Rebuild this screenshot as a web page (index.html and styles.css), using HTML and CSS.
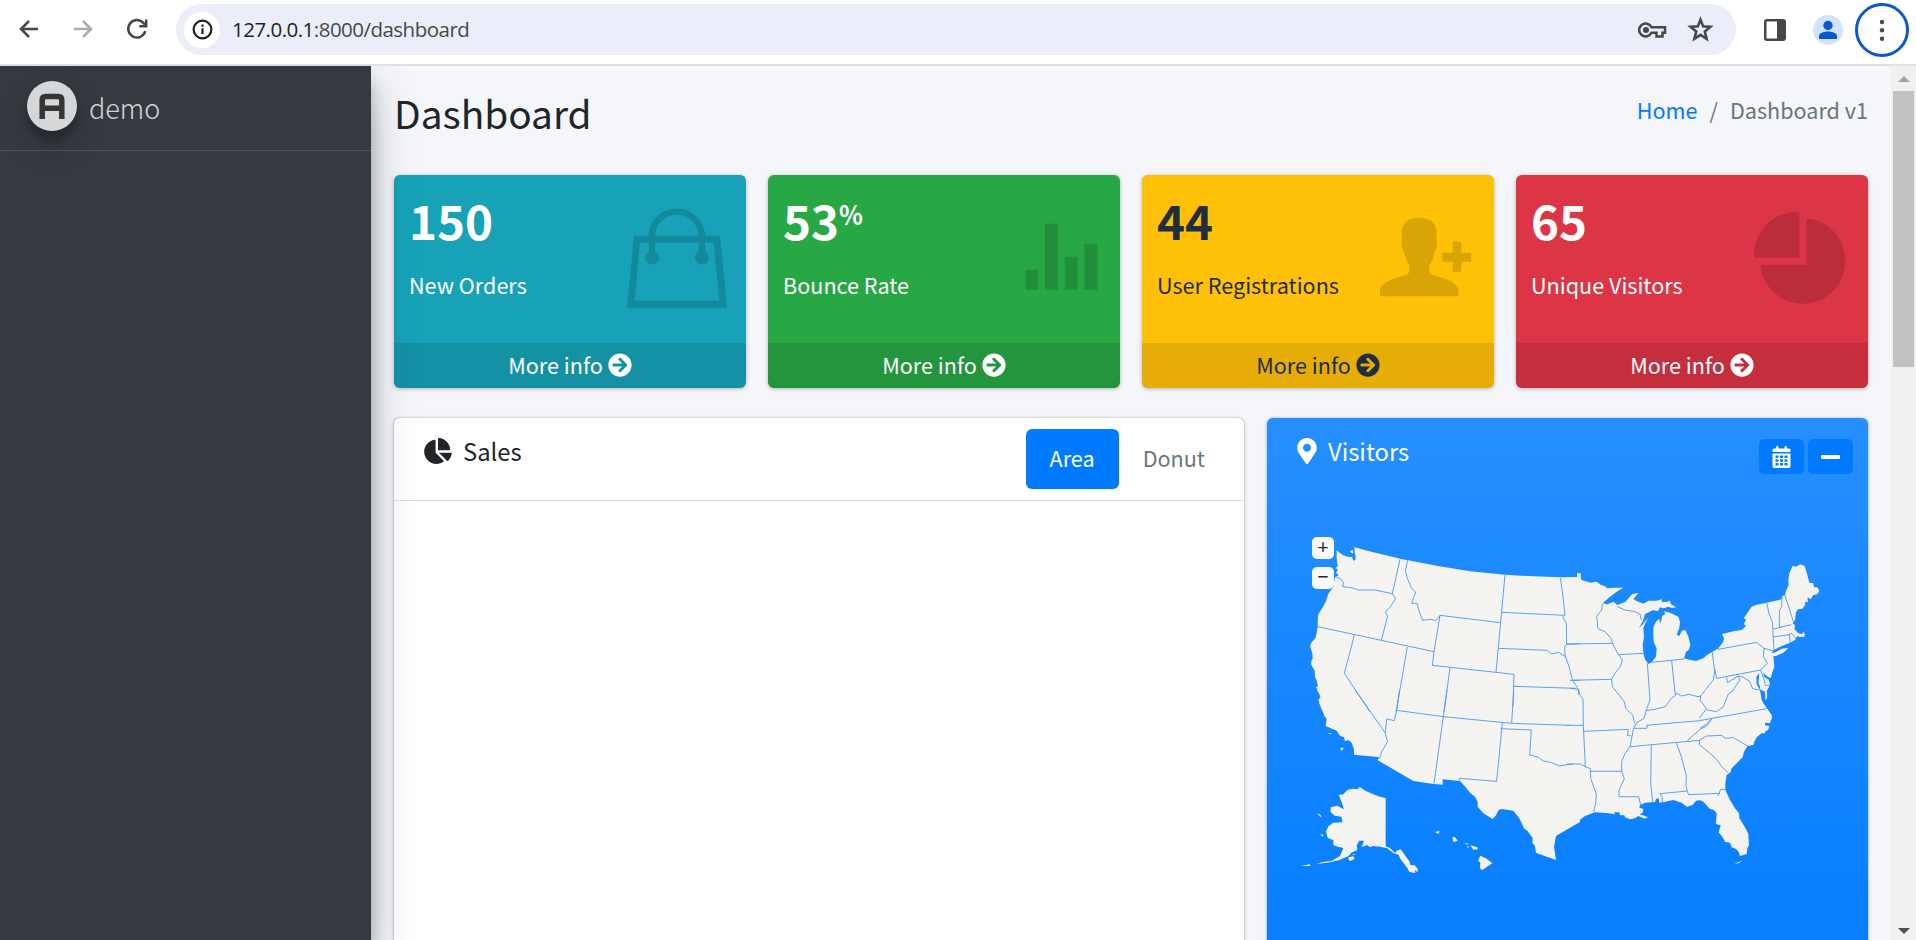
FILE: index.html
```html
<!DOCTYPE html>
<html lang="en">
<head>
<meta charset="utf-8">
<title>Dashboard</title>
<link rel="stylesheet" href="styles.css">
</head>
<body>
<svg class="defs" width="0" height="0">
  <symbol id="go" viewBox="0 0 512 512"><path d="M256 8c137 0 248 111 248 248S393 504 256 504 8 393 8 256 119 8 256 8zm-28.900 143.600l75.500 72.400H120c-13.300 0-24 10.700-24 24v16c0 13.300 10.700 24 24 24h182.600l-75.500 72.400c-9.700 9.300-9.900 24.800-.400 34.300l11 10.900c9.400 9.400 24.600 9.400 33.900 0L404.300 273c9.400-9.400 9.400-24.600 0-33.900L271.600 106.300c-9.400-9.400-24.600-9.400-33.900 0l-11 10.900c-9.500 9.600-9.300 25.100.400 34.400z"/></symbol>
</svg>
<header class="browser">
  <svg class="nav-icon" viewBox="0 0 24 24"><path d="M21 12H4M12 4l-8 8 8 8"/></svg>
  <svg class="nav-icon off" viewBox="0 0 24 24"><path d="M3 12h17M12 4l8 8-8 8"/></svg>
  <svg class="nav-icon" viewBox="0 0 24 24"><path d="M20.300 14.200A8.700 8.700 0 1 1 18.600 6.200L21 8.500M21.200 2.500V9.200H14.300"/></svg>
  <div class="omnibox">
    <span class="site-info"><svg viewBox="0 0 22 22"><circle cx="11" cy="11" r="9.300"/><path d="M11 9.700v6M11 5.700v2.300"/></svg></span>
    <span class="url"><b>127.0.0.1</b>:8000/dashboard</span>
    <svg class="key" viewBox="0 0 28 18"><path d="M13.500 6.200A6.500 6.500 0 1 0 13.500 11.800H18.500V15.500H24.500V11.800H27V6.200Z"/><circle cx="8" cy="9" r="3"/></svg>
    <svg class="star" viewBox="0 0 24 24"><path d="M12 2.500l2.500 6.500 7 .5-5.400 4.500 1.800 7-5.900-3.900L6.100 21l1.800-7-5.400-4.500 7-.500z"/></svg>
  </div>
  <svg class="panel" viewBox="0 0 22 22"><path fill-rule="evenodd" d="M3 0H19Q22 0 22 3V19Q22 22 19 22H3Q0 22 0 19V3Q0 0 3 0ZM2.500 2.500V19.500H13V2.500Z"/></svg>
  <svg class="person" viewBox="0 0 30 30"><circle class="halo" cx="15" cy="15" r="15"/><circle cx="15" cy="10.500" r="4.700"/><path d="M6 24V21C6 18 11 16.500 15 16.500S24 18 24 21V24Z"/></svg>
  <span class="menu"><svg viewBox="0 0 6 22"><circle cx="3" cy="3" r="2.200"/><circle cx="3" cy="11.300" r="2.200"/><circle cx="3" cy="19.700" r="2.200"/></svg></span>
</header>
<div class="page">
  <aside class="sidebar">
    <div class="brand">
      <svg class="logo" viewBox="0 0 50 50"><circle cx="25" cy="25" r="25"/><path d="M15.200 38V19Q15.200 15.500 19 15.500H31Q34.800 15.500 34.800 19V38M15.200 27.300H34.800"/></svg>
      <span>demo</span>
    </div>
  </aside>
  <main class="content">
    <div class="head">
      <h1>Dashboard</h1>
      <nav class="crumbs"><a>Home</a><i>/</i><span>Dashboard v1</span></nav>
    </div>
    <section class="boxes">
      <article class="box teal">
        <div class="inner"><h3>150</h3><p>New Orders</p></div>
        <svg class="art" viewBox="0 0 360 320"><path fill-rule="evenodd" d="M49 68H64V62A85 85 0 0 1 233 62V68H278L299 284H-1L20 68ZM84 68H213V62A65 65 0 0 0 84 62ZM38 89L22 263H276L259 89H233V115A21 21 0 1 1 214 115V89H84V115A21 21 0 1 1 65 115V89Z" transform="translate(1 0)"/></svg>
        <div class="more">More info <svg><use href="#go"/></svg></div>
      </article>
      <article class="box green">
        <div class="inner"><h3>53<sup>%</sup></h3><p>Bounce Rate</p></div>
        <svg class="art" viewBox="0 0 360 320"><path d="M73 170H112V230H73ZM132 32H171V230H132ZM191 131H230V230H191ZM250 92H289V230H250Z"/></svg>
        <div class="more">More info <svg><use href="#go"/></svg></div>
      </article>
      <article class="box yellow">
        <div class="inner"><h3>44</h3><p>User Registrations</p></div>
        <svg class="art" viewBox="0 0 360 320"><path d="M15 250V230C18 212 45 199 80 190Q104 183 103 174V158C95 148 91 135 88 118C80 110 77 95 81 80C74 40 90 14 133 14C176 14 190 40 184 80C188 95 185 110 178 118C175 135 170 148 163 158V174Q162 183 186 190C221 199 247 212 250 230V250ZM233 86H259V119H289V146H259V176H233V146H202V119H233Z"/></svg>
        <div class="more">More info <svg><use href="#go"/></svg></div>
      </article>
      <article class="box red">
        <div class="inner"><h3>65</h3><p>Unique Visitors</p></div>
        <svg class="art" viewBox="0 0 360 320"><path d="M151 -4V134H15C13 62 66 -6 151 -4ZM172 17C236 17 289 78 289 144C289 214 236 272 162 272C94 272 36 216 35 155H172Z"/></svg>
        <div class="more">More info <svg><use href="#go"/></svg></div>
      </article>
    </section>
    <section class="cards">
      <article class="card sales">
        <div class="card-head">
          <h2><svg class="pie" viewBox="0 0 544 512"><path d="M527.800 288H290.500l158 158c6 6 15.800 6.500 21.900.500 38.700-36.500 65.300-85.600 73.100-140.700 1.300-9.400-6.200-17.800-15.700-17.800zm-15.800-64.800C503.700 103.700 408.300 8.300 288.800 0 279.700-.600 272 7.100 272 16.200V240h223.800c9.100 0 16.800-7.700 16.200-16.800zM224 288V50.700c0-9.500-8.400-17-17.800-15.700C86.500 51.900-5.300 155.800 0 280.200 5.700 408 114.300 513.600 242.200 512c50.300-.600 96.700-16.800 134.900-44 7.900-5.600 8.400-17.200 1.600-24z"/></svg>Sales</h2>
          <div class="tabs"><span class="tab on">Area</span><span class="tab">Donut</span></div>
        </div>
      </article>
      <article class="card visitors">
        <div class="card-head">
          <h2><svg class="pin" viewBox="0 0 384 512"><path d="M172.300 501.700C27 291 0 269.400 0 192 0 86 86 0 192 0s192 86 192 192c0 77.400-27 99-172.300 309.700-9.500 13.800-29.900 13.800-39.400 0zM192 272c44.200 0 80-35.800 80-80s-35.800-80-80-80-80 35.800-80 80 35.800 80 80 80z"/></svg>Visitors</h2>
          <div class="tools">
            <span><svg class="cal" viewBox="0 0 18 22"><path fill-rule="evenodd" d="M0 4Q0 2.500 1.500 2.500H3.500V1Q3.500 0 4.700 0T6 1V2.500H12V1Q12 0 13.300 0T14.500 1V2.500H16.500Q18 2.500 18 4V6H0ZM0 7.500H18V20Q18 22 16.500 22H1.500Q0 22 0 20ZM3 9.500V12H6V9.500ZM7.500 9.500V12H10.500V9.500ZM12 9.500V12H15V9.500ZM3 13.300V15.800H6V13.300ZM7.500 13.300V15.800H10.500V13.300ZM12 13.300V15.800H15V13.300ZM3 17.100V19.600H6V17.100ZM7.500 17.100V19.600H10.500V17.100ZM12 17.100V19.600H15V17.100Z"/></svg></span>
            <span><svg class="minus" viewBox="0 0 19 4"><rect width="19" height="4" rx="1"/></svg></span>
          </div>
        </div>
        <div class="map">
          <svg viewBox="0 0 1650 1080">
            <g class="land">
              <path d="M140 90L147 97 158 105 172 110 186 111 190 122 196 120 197 108 194 98 193 82 250 97 331 116 440 137 540 154 645 164 730 169 811 172 862 172 862 160 872 160V590H104L97 570 92 552 85 540 92 530 92 522 82 514 84 500 80 482 75 472 74 452 63 433 64 422 68 416 67 400 60 378 64 368 76 354 80 340 83 320 84 285 98 262 106 248 115 222 130 200 135 172 146 166 138 158 144 150 137 144 143 138 140 115ZM180 93L188 90 190 100 184 99Z"/>
              <g transform="translate(840 60)"><path d="M-10 112H22V98L30 102 34 120 48 124 60 128 80 125 92 134 108 140 110 145 132 143 160 143 140 155 120 170 98 190 112 193 130 185 142 195 166 186 186 163 205 158 198 168 190 177 198 182 220 191 236 182 260 182 275 178 276 187 290 186 300 182 302 192 318 202 305 204 296 200 280 205 270 202 264 213 248 211 232 219 225 222 220 240 207 264 216 255 234 233 226 250 220 265 222 290 218 315 221 345 226 360 236 372 245 367 258 350 260 325 252 308 250 290 250 262 258 245 268 236 270 250 275 240 276 228 286 222 282 214 300 218 325 230 330 246 328 264 320 284 328 288 336 272 346 270 355 290 361 315 356 330 348 335 342 355 360 360 378 363 400 355 414 343 428 335 445 325 460 305 462 295 456 282 490 274 515 270 528 258 522 252 528 238 521 235 530 222 545 200 560 194 590 188 635 178 636 168 645 166 648 152 656 135 655 122 658 100 668 77 678 80 690 73 704 78 712 105 718 128 730 130 732 142 742 142 748 153 742 163 730 165 722 178 712 172 714 186 705 185 706 194 697 206 686 207 678 215 675 240 668 250 675 255 673 267 685 280 696 283 700 275 705 283 690 292 681 288 675 300 660 308 630 320 612 330 604 338 614 338 636 326 655 324 640 338 618 348 610 349 613 380 606 400 602 415 590 408 580 398 582 410 597 420 600 435 590 454 592 470 586 482 585 455 570 448 570 440 565 430 568 400 559 410 560 432 570 450 572 462 575 480 583 495 592 507 605 530 600 550 585 548V580H-10Z"/></g>
              <g transform="translate(840 510)"><path d="M-10 40H575L583 45 592 57 605 75 605 88 595 98 583 97 584 106 598 108 594 120 575 129 560 142 553 155 550 165 533 168 522 185 518 202 500 220 484 236 482 246 470 255 466 280 466 300 480 330 495 355 507 370 508 384 525 412 535 432 537 465 532 475 530 492 510 498 505 484 497 476 485 472 480 458 465 455 457 440 446 427 452 406 438 402 440 370 432 360 420 357 400 335 390 331 378 332 368 345 350 350 335 338 310 330 285 335 268 338 266 325 258 326 255 336 225 338 210 345 208 353 220 356 218 368 208 374 220 376 233 382 224 386 205 378 196 384 180 388 165 382 163 376 150 376 148 367 132 367 135 373 110 369 75 367 45 378 20 397 0 411-10 416Z"/></g>
              <g transform="translate(0 510)"><path d="M78 -10H870V396L840 413 798 438 792 470 798 510 782 504 770 500 738 488 734 466 727 460 728 444 712 422 702 415 688 385 670 362 650 359 635 357 625 361 618 376 608 387 580 370 563 350 563 336 555 320 540 308 526 290 510 273 458 268V284L431 282 370 273 262 210 270 202 192 194 192 178 185 158 175 150 165 154 162 142 150 137 140 122 107 108 110 88 96 60 87 38 93 24Z"/>
                <path d="M146 314L160 313 172 300 188 296 202 298 210 291 222 300 234 306 250 313 270 320 287 324V469L300 474 316 490 320 482 332 478 346 497 358 514 362 526 374 526 383 536V546L374 540 376 549 358 546 352 534 340 518 330 505 326 494 312 490 290 474 270 470 248 468 240 472 232 465 215 471 222 452 208 452 200 466 202 480 184 488 176 498 148 510 120 517 80 522 98 516 126 512 150 498 160 474 144 470 130 466 130 450 113 444 108 424 116 408 130 398 158 397 154 380 134 377 122 366 122 352 142 347 162 358 154 334ZM176 502L190 499 194 507 180 513 175 508ZM33 528L60 523 60 528ZM188 492L197 492 189 496ZM82 370L92 375 95 383 88 377ZM90 433L100 434 99 440ZM435 426L448 422 446 432ZM487 442L495 441 503 453 490 455ZM521 460L537 461 534 464ZM541 466L562 472 563 478 550 479ZM530 469L537 470 534 474ZM571 497L590 506 607 520 591 530 576 541 570 534 571 518 564 512ZM112 130L130 131 118 133ZM152 173L162 174 153 184Z"/></g>
              <path d="M1334 1031L1346 1026 1358 1022 1345 1030ZM1533 350L1547 342 1541 352Z"/>
            </g>
            <g class="borders">
              <path d="M135 170L150 175 160 188 158 200 185 203 205 210 255 210 307 221 330 118M307 221L317 236 300 262 286 276 293 288 274 361M83 320L432 395M193 346L163 460 240 576M352 381L318 577M353 121L346 152 352 175 365 205 377 216 365 250 381 250 388 276 398 301 424 298 436 302 445 294 450 286 631 308M450 286L432 395 427 436 672 463M645 165L618 458M635 277L825 286M626 385L772 391 785 402 806 397 826 410M480 444L462 576M672 463L669 560M670 499L858 505M811 173L817 215 825 284 819 292 829 310 830 372 824 380 825 405 837 440 848 482 862 502 868 515 866 524M830 373L870 371M848 481L870 481"/>
              <g transform="translate(840 60)"><path d="M97 192L95 210 80 228 84 266 105 275 124 296 127 310 143 340 157 360 152 378 133 402 125 418 127 440 145 462 163 485 167 505 188 525 194 550M-10 312L127 310M0 421L125 418M143 344L220 340M142 200L165 210 195 215 210 222 214 240M232 370L240 480 228 512M228 512L255 508 286 500 305 474 316 467M245 367L342 357M305 362L316 467M316 458L335 468 356 463 384 470 392 468 408 448 430 420 434 395 427 337M434 385L440 415 572 390 592 370 580 350 582 325 560 307 444 328V320M582 325L611 333M590 188L598 225 607 245 612 333M636 168L635 200 628 212 628 264M645 166L670 245M610 267L664 254M610 291L658 284 661 308M658 284L666 280 680 298M572 390L582 420 586 436H600M470 412L472 428 504 408 520 412 540 425 548 446 570 450M504 408L510 420 486 455 475 462 460 500 440 515 412 510 390 480 392 468M408 508L388 535M228 556L388 542 590 506M425 536L410 552 390 565M0 445L25 448"/></g>
              <g transform="translate(840 510)"><path d="M24 0L28 12 39 28 40 106M-10 106H40M40 106L46 230M42 124L175 118 172 136 184 138M228 62L222 85 200 98 190 118 180 170 165 190 155 215 155 244 163 266 147 300V320H206L213 350M-10 222L30 222 46 230 61 236 62 265 79 312 77 340 71 366M61 244H155M180 170L388 151 410 138 455 136 467 145 490 143 533 168M388 151L388 164 420 190 440 208 455 230 475 248M425 88L410 108 390 118 352 152M190 115H230L232 108M244 165L242 280 248 335M319 159L334 200 349 258 348 286 352 305 356 314 447 310 445 316 452 298H466M352 303L270 311 277 322 277 336"/></g>
              <g transform="translate(0 510)"><path d="M196 0L285 128 293 155 275 185 270 202M329 0L320 61 313 92 290 87 286 128M320 61L460 80 665 100 840 106M471 0L432 281M671 0L665 99M637 97L620 274 508 265V271M632 116L724 120 719 194 745 202 760 213 785 218 808 228 830 224 850 222"/></g>
            </g>
          </svg>
          <span class="zoom in">+</span><span class="zoom out">−</span>
        </div>
      </article>
    </section>
  </main>
  <div class="scroll"><i class="up"></i><i class="thumb"></i><i class="down"></i></div>
</div>
</body>
</html>
```
FILE: styles.css
```css
* { box-sizing: border-box; margin: 0; padding: 0; }
body { height: 940px; overflow: hidden; display: flex; flex-direction: column; font: 21.600px/36px "Noto Sans CJK SC", sans-serif; color: #212529; background: #f4f6f9; white-space: nowrap; }
svg { display: block; flex: none; overflow: visible; }
.defs { position: absolute; }

.browser { flex: none; height: 66px; padding: 4px 6px 9px 17px; background: #fff; border-bottom: 2px solid #dfe1df; display: flex; align-items: flex-start; position: relative; z-index: 3; }
.nav-icon { width: 24px; height: 24px; margin: 13px 30px 0 0; fill: none; stroke: #474747; stroke-width: 2.500; }
.nav-icon.off { stroke: #ababab; }
.nav-icon:nth-child(3) { margin-right: 27px; }
.omnibox { width: 1560px; height: 51px; border-radius: 26px; background: #ebeef8; display: flex; align-items: center; padding: 0 23px 0 8px; }
.site-info { width: 36px; height: 36px; border-radius: 50%; background: #fff; display: flex; align-items: center; justify-content: center; margin-right: 12px; }
.site-info svg { width: 21px; height: 21px; fill: none; stroke: #1f1f1f; stroke-width: 2.300; }
.url { flex: 1; font: 20.500px/34px "Open Sans", sans-serif; letter-spacing: -.520px; padding-bottom: 2px; color: #474747; }
.url b { font-weight: 400; color: #1f1f1f; }
.key { width: 28px; height: 18px; fill: none; stroke: #474747; stroke-width: 2.500; margin-right: 22px; }
.key circle { fill: #474747; stroke: none; }
.star { width: 25px; height: 25px; fill: none; stroke: #474747; stroke-width: 2.500; }
.panel { width: 22px; height: 22px; fill: #474747; margin: 15px 27px 0 28px; }
.person { width: 30px; height: 30px; fill: #0b57d0; margin: 11px 12px 0 0; }
.halo { fill: #d3e3fd; }
.menu { flex: none; width: 54px; height: 54px; margin-top: -1px; border: 3px solid #0b57d0; border-radius: 50%; display: flex; align-items: center; justify-content: center; }
.menu svg { width: 6px; height: 22px; fill: #474747; }

.page { flex: 1; min-height: 0; display: flex; }
.sidebar { flex: none; width: 371px; background: #343a40; z-index: 2; box-shadow: 0 21px 42px rgba(0,0,0,.25), 0 15px 15px rgba(0,0,0,.22); }
.brand { height: 85px; border-bottom: 1px solid #4b545c; display: flex; padding: 15px 27px; font-size: 27px; font-weight: 300; color: rgba(255,255,255,.8); }
.logo { width: 50px; height: 50px; border-radius: 50%; margin-right: 12px; opacity: .8; fill: #fff; box-shadow: 0 15px 30px rgba(0,0,0,.19), 0 9px 9px rgba(0,0,0,.23); }
.logo path { fill: none; stroke: #343434; stroke-width: 5.500; }
.brand span { line-height: 54px; }

.content { flex: 1; min-width: 0; padding: 22px 23px 0; overflow: hidden; }
.head { height: 87px; display: flex; justify-content: space-between; }
h1 { font-size: 38.800px; line-height: 49px; font-weight: 400; }
.crumbs { display: flex; line-height: 43px; color: #6c757d; }
.crumbs a { color: #007bff; }
.crumbs i { font-style: normal; padding: 0 12px; }

.boxes { display: grid; grid-template-columns: repeat(4, 352px); gap: 22px; margin-bottom: 30px; }
.box { height: 213px; border-radius: 6px; position: relative; color: #fff; box-shadow: 0 0 1px rgba(0,0,0,.13), 0 1px 4px rgba(0,0,0,.25); }
.teal { background: #17a2b8; }
.green { background: #28a745; }
.yellow { background: #ffc107; color: #1f2d3d; }
.red { background: #dc3545; }
.inner { height: 168px; padding: 16px 15px 0; }
.inner h3 { font-size: 47.500px; line-height: 58px; font-weight: 700; margin-bottom: 18px; display: flex; }
.inner sup { font-size: 27px; font-weight: 700; line-height: 45px; transform: scaleX(.92); transform-origin: left; }
.art { position: absolute; left: 233px; top: 38px; width: 120px; height: 106.670px; fill: rgba(0,0,0,.15); }
.more { height: 45px; padding-top: 4px; background: rgba(0,0,0,.1); border-radius: 0 0 6px 6px; display: flex; justify-content: center; gap: 5px; }
.more svg { width: 24px; height: 24px; margin-top: 6px; fill: currentColor; }

.cards { display: grid; grid-template-columns: 850px 601px; gap: 23px; }
.card { height: 640px; border-radius: 6px; background: #fff; box-shadow: 0 0 2px rgba(0,0,0,.25), 0 1px 4px rgba(0,0,0,.2); }
.card-head { display: flex; justify-content: space-between; height: 83px; padding: 11px 15px 0 30px; }
.sales .card-head { border-bottom: 1px solid #dfdfdf; }
.card h2 { display: flex; font-size: 23.800px; line-height: 43px; font-weight: 400; }
.pie { width: 28px; height: 26px; margin: 9px 11px 0 0; fill: #212529; }
.tabs { display: flex; }
.tab { height: 60px; line-height: 58px; padding: 0 24px; color: #6c757d; border-radius: 6px; }
.tab.on { background: #007bff; color: #fff; }
.visitors { background: linear-gradient(#268fff, #007bff); color: #fff; }
.pin { width: 20px; height: 26px; margin: 9px 11px 0 0; fill: #fff; }
.tools { display: flex; gap: 4px; padding-top: 10px; }
.tools span { width: 45px; height: 35px; border-radius: 5px; background: #007bff; display: flex; align-items: center; justify-content: center; }
.tools svg { fill: #fff; }
.cal { width: 19px; height: 22px; }
.minus { width: 19px; height: 4px; }
.map { position: relative; padding: 19px 0 0 23px; }
.map svg { width: 550px; height: 360px; }
.land { fill: #f4f3f0; }
.borders { fill: none; stroke: #4f9be9; stroke-width: 2.800; stroke-linejoin: round; }
.zoom { position: absolute; left: 45px; width: 22px; height: 22px; border-radius: 5px; background: #fafafc; color: #292929; font: 20px/20px "Noto Sans", sans-serif; text-align: center; }
.in { top: 36px; }
.out { top: 66px; }

.scroll { flex: none; width: 25px; background: #f0f0f0; display: flex; flex-direction: column; align-items: center; padding: 10px 0 6px; }
.up, .down { border: 6px solid transparent; border-top: 0; border-bottom-color: #a3a3a3; }
.thumb { width: 21px; height: 276px; margin: 9px 0 auto; background: #c1c1c1; }
.down { border-top: 6px solid #505050; border-bottom: 0; }
```
